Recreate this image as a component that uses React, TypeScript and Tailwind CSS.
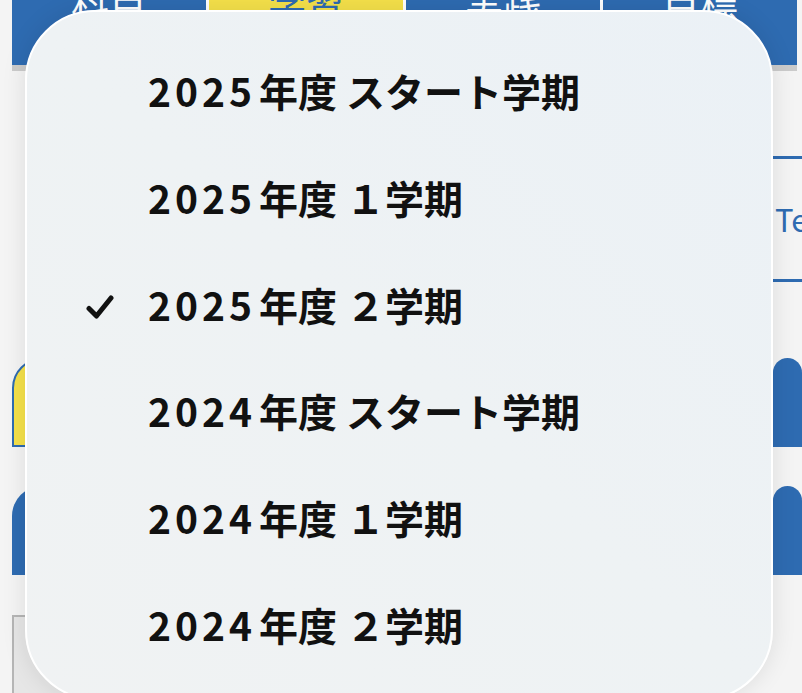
import { Fragment } from 'react';

const TABS = [
  { label: '科目', active: false },
  { label: '学習', active: true },
  { label: '実践', active: false },
  { label: '目標', active: false },
];

const TERMS = [
  { year: '2025', term: 'スタート学期', selected: false },
  { year: '2025', term: '１学期', selected: false },
  { year: '2025', term: '２学期', selected: true },
  { year: '2024', term: 'スタート学期', selected: false },
  { year: '2024', term: '１学期', selected: false },
  { year: '2024', term: '２学期', selected: false },
];

const jp = "font-['Noto_Sans_CJK_JP','Noto_Sans',sans-serif]";

function CheckMark() {
  return (
    <svg viewBox="0 0 28 26" className="h-[26px] w-[28px]" fill="none">
      <path
        d="M3 14.5 L10.5 22 L25 4"
        stroke="#111"
        strokeWidth="5"
        strokeLinecap="round"
        strokeLinejoin="round"
      />
    </svg>
  );
}

function TermMenu() {
  return (
    <div className="absolute top-[10px] left-[25px] h-[690px] w-[748px] rounded-[70px] border-2 border-white bg-gradient-to-bl from-[#ebf1f6] via-[#eef2f4] to-[#f0f2f3] shadow-[0_0_24px_rgba(0,0,0,0.10)]">
      <ul className="flex flex-col pt-[66px]">
        {TERMS.map((t, i) => (
          <li key={i} className="flex h-[106.8px] items-start">
            <span className="flex w-[121px] justify-end pt-[2px] pr-[34px]">
              {t.selected ? <CheckMark /> : null}
            </span>
            <span className={`${jp} -mt-[12px] text-[39px] leading-[48px] font-bold whitespace-nowrap text-[#111]`}>
              <span className="mr-[3px] tracking-[4px]">{t.year}</span>
              <span>年度 </span>
              {t.term}
            </span>
          </li>
        ))}
      </ul>
    </div>
  );
}

export default function App() {
  return (
    <div className={`relative h-[693px] w-[802px] overflow-hidden bg-[#f4f4f4] ${jp}`}>
      {/* tab bar */}
      <div className="ml-[12px] flex h-[71px] w-[785px] border-b-[6px] border-[#cbcbcb] bg-[#2e6bb1]">
        {TABS.map((tab, i) => (
          <Fragment key={tab.label}>
            {i > 0 ? <div className="w-[3px] bg-white" /> : null}
            <div
              className={`flex flex-1 justify-center overflow-hidden ${
                tab.active ? 'bg-[#f5e14a] text-[#2e6bb1]' : 'text-white'
              }`}
            >
              <span className="-mt-[17px] text-[38px] leading-none">{tab.label}</span>
            </div>
          </Fragment>
        ))}
      </div>

      {/* selected term display */}
      <div className="mt-[85px] ml-[30px] flex h-[126px] items-center border-y-[3px] border-[#2e6bb1]">
        <span className="ml-[745px] text-[31px] whitespace-nowrap text-[#2e6bb1]">Test</span>
      </div>

      {/* category tabs */}
      <div className="mt-[76px] ml-[12px] flex flex-col gap-[39px]">
        <div className="flex gap-[3px]">
          <div className="h-[89px] w-[196px] rounded-t-[30px] border-2 border-[#2e6bb1] bg-[#f5e14a]" />
          <div className="h-[89px] w-[196px] rounded-t-[30px] bg-[#2e6bb1]" />
          <div className="h-[89px] w-[196px] rounded-t-[30px] bg-[#2e6bb1]" />
          <div className="h-[89px] w-[190px] rounded-t-[30px] bg-[#2e6bb1]" />
          <div className="h-[89px] w-[30px] rounded-t-[30px] bg-[#2e6bb1]" />
        </div>
        <div className="flex gap-[3px]">
          <div className="h-[89px] w-[196px] rounded-t-[30px] bg-[#2e6bb1]" />
          <div className="h-[89px] w-[196px] rounded-t-[30px] bg-[#2e6bb1]" />
          <div className="h-[89px] w-[196px] rounded-t-[30px] bg-[#2e6bb1]" />
          <div className="h-[89px] w-[190px] rounded-t-[30px] bg-[#2e6bb1]" />
          <div className="h-[89px] w-[30px] rounded-t-[30px] bg-[#2e6bb1]" />
        </div>
      </div>

      {/* input box */}
      <div className="mt-[40px] ml-[12px] flex h-[90px] w-[300px] items-end border-2 border-[#b5b5b5] bg-[#e6e6e6] pb-[36px] pl-[28px]">
        <span className="text-[10px] leading-none text-[#3b78d8]">▲</span>
      </div>

      <TermMenu />
    </div>
  );
}
